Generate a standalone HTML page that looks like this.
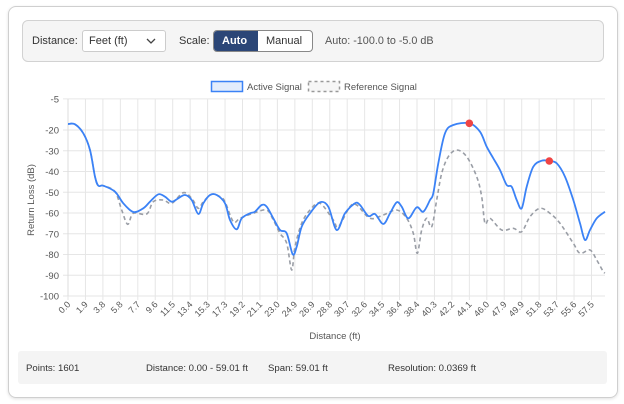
<!DOCTYPE html>
<html><head><meta charset="utf-8"><style>
*{box-sizing:border-box;margin:0;padding:0}
body{width:624px;height:404px;background:#fff;font-family:"Liberation Sans",sans-serif;position:relative;overflow:hidden;color:#333}
.card{position:absolute;left:8px;top:6px;width:610px;height:392px;border:1px solid #cfcfcf;border-radius:8px;box-shadow:0 1px 3px rgba(0,0,0,.12)}
.tb{position:absolute;left:22px;top:20px;width:582px;height:42px;background:#f5f5f5;border:1px solid #d2d2d2;border-radius:6px}
.t{position:absolute;font-size:11.5px;color:#333;white-space:nowrap}
.f{font-size:9.6px;top:363px}
.sel{position:absolute;left:82px;top:30px;width:84px;height:22px;background:#fff;border:1px solid #ccc;border-radius:3px}
.bg{position:absolute;left:213px;top:30px;width:100px;height:22px;border:1px solid #888;border-radius:4px;overflow:hidden;background:#fff}
.foot{position:absolute;left:18px;top:351px;width:589px;height:33px;background:#f4f4f4;border-radius:3px}
</style></head><body>
<div class="card"></div>
<div class="tb"></div>
<div class="t" style="left:32px;top:35px;font-size:11px">Distance:</div>
<div class="sel"></div>
<div class="t" style="left:89px;top:35px;font-size:11px">Feet (ft)</div>
<svg style="position:absolute;left:146px;top:37px" width="10" height="8"><path d="M1 2 L5 6 L9 2" stroke="#444" stroke-width="1.3" fill="none"/></svg>
<div class="t" style="left:179px;top:35px;font-size:11px">Scale:</div>
<div class="bg"><div style="position:absolute;left:0;top:0;width:44px;height:22px;background:#2b4677"></div></div>
<div class="t" style="left:222px;top:35px;color:#fff;font-weight:bold;font-size:11px">Auto</div>
<div class="t" style="left:266px;top:35px;font-size:11px">Manual</div>
<div class="t" style="left:325px;top:35px;color:#555;font-size:10.8px">Auto: -100.0 to -5.0 dB</div>
<svg id="ch" style="position:absolute;left:0;top:0" width="624" height="404" font-family="Liberation Sans, sans-serif"></svg>
<div class="foot"></div>
<div class="t f" style="left:26px">Points: 1601</div>
<div class="t f" style="left:146px">Distance: 0.00 - 59.01 ft</div>
<div class="t f" style="left:268px">Span: 59.01 ft</div>
<div class="t f" style="left:388px">Resolution: 0.0369 ft</div>
<script>
var s='';
function Y(v){return 130+(-20-v)*2.075;}
var ys=[-5,-20,-30,-40,-50,-60,-70,-80,-90,-100];
ys.forEach(function(v){var y=Y(v);s+='<line x1="63" x2="605" y1="'+y+'" y2="'+y+'" stroke="#e6e6e6"/>';s+='<text x="59" y="'+(y+3.5)+'" font-size="9.5" fill="#555" text-anchor="end">'+v+'</text>';});
var lab=["0.0","1.9","3.8","5.8","7.7","9.6","11.5","13.4","15.3","17.3","19.2","21.1","23.0","24.9","26.9","28.8","30.7","32.6","34.5","36.4","38.4","40.3","42.2","44.1","46.0","47.9","49.9","51.8","53.7","55.6","57.5"];
for(var i=0;i<31;i++){var x=68+i*17.45;s+='<line x1="'+x+'" x2="'+x+'" y1="99" y2="300" stroke="#e6e6e6"/>';s+='<text transform="translate('+(x+3)+',305) rotate(-45)" font-size="9" fill="#555" text-anchor="end">'+lab[i]+'</text>';}
s+='<line x1="68" x2="68" y1="99" y2="296" stroke="#ddd"/>';
s+='<text x="335" y="339" font-size="9.5" fill="#555" text-anchor="middle">Distance (ft)</text>';
s+='<text transform="translate(34,200) rotate(-90)" font-size="9.5" fill="#555" text-anchor="middle">Return Loss (dB)</text>';
s+='<rect x="211.5" y="81.5" width="31" height="10" fill="#e3edfc" stroke="#3b82f6" stroke-width="1.5"/><text x="247" y="90" font-size="9.5" fill="#555">Active Signal</text>';
s+='<rect x="308.5" y="81.5" width="31" height="10" fill="#f6f6f6" stroke="#999" stroke-width="1.5" stroke-dasharray="3,3"/><text x="344" y="90" font-size="9.5" fill="#555">Reference Signal</text>';
function path(p){var d='M'+p[0][0]+' '+p[0][1];for(var i=0;i<p.length-1;i++){var p0=p[i-1]||p[i],p1=p[i],p2=p[i+1],p3=p[i+2]||p2;d+=' C'+(p1[0]+(p2[0]-p0[0])/6)+' '+(p1[1]+(p2[1]-p0[1])/6)+' '+(p2[0]-(p3[0]-p1[0])/6)+' '+(p2[1]-(p3[1]-p1[1])/6)+' '+p2[0]+' '+p2[1];}return d;}
var A=[[68,124],[75,124.3],[83.3,133.3],[90,150],[95,176.7],[98.3,185.7],[103.3,185.7],[115,191.7],[123.3,203.3],[133.3,212],[143.3,208.3],[150,201.7],[158.3,194.3],[165,196.7],[171.7,201.7],[178.3,198.3],[185,195],[191.7,200],[198.3,214],[203.3,203.3],[210,195],[216.7,195],[225,203.3],[230,220],[236.7,229.3],[241.7,218.3],[250,213.3],[255,211.7],[261.7,205],[266.7,206.7],[273.3,218.3],[280,230],[286.7,233.3],[292.7,254.3],[296.7,246.7],[301.7,226.7],[310,213.3],[320,202.3],[328.3,206.7],[336.7,230],[345,213.3],[355,203.3],[360,205],[368.3,216],[375,214],[383.3,224],[390,213.3],[396.7,202.3],[401.7,206.7],[408.3,218.3],[416.7,207.3],[423.3,211.7],[430,200],[433.3,193.3],[438.3,163.3],[445,133.3],[453.3,125],[469.3,123.3],[480,131.7],[486.7,146.7],[493.3,158.3],[500,170],[506.7,185],[511.7,186.7],[516.7,200],[521.7,208.3],[526.7,186.7],[533.3,166.7],[541.7,160.7],[549.3,161],[556.7,163.3],[565,176.7],[573.3,200],[580,223.3],[585,240],[590,230],[596.7,218.3],[605,211.7]];
var R=[[68,124],[75,124.3],[83.3,133.3],[90,150],[95,176.7],[98.3,185.7],[103.3,185.7],[115,191.7],[121.7,210],[127.7,224.3],[133.3,213.3],[146.7,214],[153.3,201.7],[163.3,200],[171.7,203.3],[183.3,192.7],[191.7,198.3],[198.3,208.3],[203.3,201.7],[211.7,194.3],[220,196.7],[225,201.7],[233.3,221.7],[240,218.3],[253.3,213.3],[266.7,210],[273.3,220],[280,233.3],[286.7,243.3],[291.7,270],[295,246.7],[301.7,223.3],[310,210],[320,203.3],[333.3,220],[338.3,226.7],[350,206.7],[356.7,205],[370,218.3],[383.3,215],[396.7,210],[406.7,218.3],[413.3,233.3],[417.3,253.3],[421.7,230],[426.7,218.3],[431.7,226.7],[436.7,200],[441.7,173.3],[448.3,156.7],[456.7,150],[466.7,156.7],[476.7,176.7],[481.7,196.7],[485,223.3],[490,218.3],[501.7,230],[513.3,228.3],[521.7,231.7],[530,216.7],[540,208.3],[550,213.3],[560,223.3],[573.3,243.3],[580,253.3],[590,250],[596.7,260],[603.3,271.7],[605,272.7]];
s+='<path d="'+path(R)+'" fill="none" stroke="#9a9ea6" stroke-width="1.6" stroke-dasharray="4,3"/>';
s+='<path d="'+path(A)+'" fill="none" stroke="#3b82f6" stroke-width="1.8"/>';
s+='<circle cx="469.3" cy="123.3" r="3.8" fill="#ef4444"/><circle cx="549.3" cy="161" r="3.8" fill="#ef4444"/>';
document.getElementById('ch').innerHTML=s;
</script>
</body></html>
